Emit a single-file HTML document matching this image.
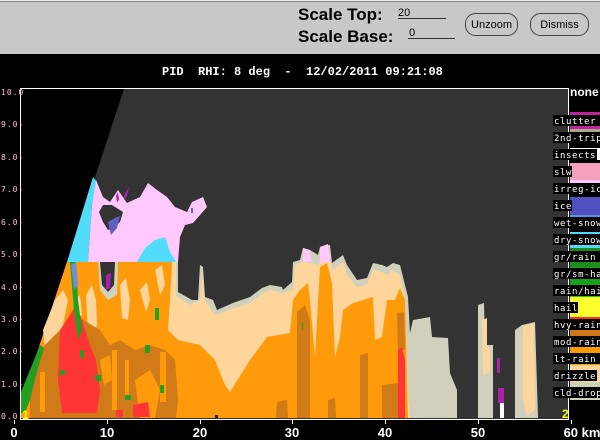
<!DOCTYPE html>
<html><head><meta charset="utf-8"><style>
html,body{margin:0;padding:0;background:#000;width:600px;height:440px;overflow:hidden}
svg{display:block}
</style></head><body>
<svg width="600" height="440" xmlns="http://www.w3.org/2000/svg">
<rect x="0" y="0" width="600" height="440" fill="#000"/>
<rect x="0" y="0" width="600" height="54" fill="#c8c8c8"/>
<rect x="0" y="0" width="600" height="1" fill="#eee"/>
<rect x="0" y="1" width="600" height="1" fill="#888"/>
<text x="298" y="20" font-family="Liberation Sans, sans-serif" font-weight="bold" font-size="17" fill="#000">Scale Top:</text>
<text x="298" y="42" font-family="Liberation Sans, sans-serif" font-weight="bold" font-size="17" fill="#000">Scale Base:</text>
<text x="398" y="16" font-family="Liberation Sans, sans-serif" font-size="11" fill="#000">20</text>
<rect x="398" y="18" width="48" height="1" fill="#333"/>
<text x="409" y="36" font-family="Liberation Sans, sans-serif" font-size="11" fill="#000">0</text>
<rect x="408" y="38" width="47" height="1" fill="#333"/>
<rect x="465.5" y="13.5" width="52" height="22" rx="10" fill="#c8c8c8" stroke="#444"/>
<text x="491.5" y="28" text-anchor="middle" font-family="Liberation Sans, sans-serif" font-size="11" fill="#000">Unzoom</text>
<rect x="530.5" y="13.5" width="58" height="22" rx="10" fill="#c8c8c8" stroke="#444"/>
<text x="559.5" y="28" text-anchor="middle" font-family="Liberation Sans, sans-serif" font-size="11" fill="#000">Dismiss</text>
<text x="162" y="75" xml:space="preserve" font-family="Liberation Mono, monospace" font-weight="bold" font-size="12" fill="#fff">PID  RHI: 8 deg  -  12/02/2011 09:21:08</text>

<rect x="21" y="89" width="547" height="330" fill="#333"/>
<polygon points="21,89 124,89 21,402" fill="#000"/>

<polygon fill="#d0d0bc" points="67,262 178,262 178,292 192,300 198,300 200,265 203,267 205,297 213,300 217,310 233,303 250,297 262,288 270,285 282,287 283,290 292,282 293,262 300,260 303,248 310,250 318,255 320,247 330,245 332,263 343,255 347,265 357,280 367,278 373,263 382,265 387,267 393,263 400,265 408,297 410,333 413,320 430,317 432,337 448,338 450,373 457,390 457,418 21,418 21,402"/>
<polygon fill="#fed69c" points="67,262 176,262 176,296 190,305 200,300 202,272 205,300 215,315 235,308 250,303 262,294 270,290 282,293 293,290 295,265 303,262 310,263 318,265 320,262 330,262 333,270 343,262 347,275 357,287 367,285 373,270 382,272 387,275 393,270 400,275 405,300 408,400 410,418 21,418 21,402"/>
<polygon fill="#d0d0bc" points="98,262 118,262 117,295 108,300 100,290"/>
<polygon fill="#333" points="100,262 115,262 114,285 108,292 102,285"/>
<polygon fill="#aa22aa" points="106,275 111,273 110,288 106,290"/>

<polygon fill="#ff9a0a" points="67,262 98,262 100,290 108,300 117,295 118,262 172,262 170,300 168,330 178,340 200,345 215,360 225,385 230,392 250,360 267,337 290,333 293,300 300,290 308,283 310,300 315,357 320,267 327,263 332,283 335,357 340,337 343,310 353,303 373,297 375,340 382,337 387,300 395,300 400,288 405,300 408,418 21,418 21,402"/>
<polygon fill="#fed69c" points="43,330 55,300 63,290 68,300 62,330 55,348 45,350"/>
<polygon fill="#fed69c" points="86,295 92,285 96,300 97,325 92,345 88,330"/>
<polygon fill="#fed69c" points="120,285 126,278 130,300 128,320 122,318"/>
<polygon fill="#fed69c" points="140,290 147,282 150,300 146,312"/>
<polygon fill="#fed69c" points="155,270 162,265 165,285 160,295"/>
<polygon fill="#fed69c" points="75,300 80,295 82,315 77,318"/>

<polygon fill="#d07a18" points="30,370 45,345 60,330 80,318 100,330 110,345 120,340 135,350 150,345 165,350 175,360 178,400 176,418 30,418"/>
<rect x="112" y="350" width="5" height="60" fill="#ff9a0a"/>
<rect x="125" y="360" width="4" height="35" fill="#ff9a0a"/>
<rect x="160" y="352" width="6" height="50" fill="#ff9a0a"/>
<rect x="40" y="372" width="5" height="40" fill="#ff9a0a"/>
<polygon fill="#d07a18" points="297,312 305,305 310,320 310,418 297,418"/>
<polygon fill="#d07a18" points="360,355 368,353 368,418 360,418"/>
<polygon fill="#d07a18" points="382,385 398,383 400,418 382,418"/>
<polygon fill="#d07a18" points="397,313 404,312 405,350 398,350"/>
<polygon fill="#d07a18" points="277,402 287,400 288,418 276,418"/>
<polygon fill="#d07a18" points="328,400 335,398 336,418 328,418"/>
<polygon fill="#ff9a0a" points="135,380 150,370 160,390 155,418 140,418"/>
<polygon fill="#ff9a0a" points="100,360 110,355 112,380 104,385"/>
<polygon fill="#ff3434" points="60,330 70,315 76,305 82,320 90,345 96,360 100,390 97,413 62,413 58,380"/>
<polygon fill="#ff3434" points="133,405 148,402 150,417 133,417"/>
<polygon fill="#ff3434" points="116,410 123,410 123,417 116,417"/>
<polygon fill="#ff3434" points="398,350 402,347 405,360 405,418 398,418"/>
<polygon fill="#22a022" points="21,392 30,370 40,345 44,348 36,375 30,400 25,413 21,413"/>
<polygon fill="#22a022" points="70,262 76,262 78,300 82,330 78,340 74,310"/>
<rect x="80" y="350" width="4" height="8" fill="#22a022"/>
<rect x="95" y="375" width="6" height="6" fill="#22a022"/>
<rect x="155" y="308" width="4" height="12" fill="#22a022"/>
<rect x="125" y="395" width="6" height="5" fill="#22a022"/>
<rect x="145" y="345" width="5" height="8" fill="#22a022"/>
<rect x="60" y="370" width="5" height="5" fill="#22a022"/>
<rect x="160" y="385" width="4" height="8" fill="#22a022"/>
<rect x="302" y="322" width="1" height="8" fill="#22a022"/>
<polygon fill="#6a8ee0" points="71,265 76,262 78,285 74,290"/>

<polygon fill="#50dcfa" points="93,177 97,182 92,205 88,262 67,262"/>
<polygon fill="#ffc8ff" points="96,180 103,197 110,202 118,190 127,203 140,197 148,183 157,190 167,197 175,207 187,212 192,202 203,197 207,207 193,223 185,225 180,237 178,262 88,262 92,205"/>
<polygon fill="#50dcfa" points="137,262 145,248 155,240 165,237 170,252 176,262"/>
<polygon fill="#333" points="103,205 112,205 123,212 120,222 113,228 108,230 103,222 99,212"/>
<polygon fill="#6060c4" points="108,222 115,218 120,216 117,228 111,235"/>
<polygon fill="#aa22aa" points="116,196 118,192 119,200 117,202"/>
<polygon fill="#aa22aa" points="124,195 129,187 127,196 124,200"/>
<rect x="191" y="208" width="2" height="5" fill="#6060c4"/>
<polygon fill="#ffc8ff" points="303,248 310,250 311,262 303,262"/>
<polygon fill="#ffc8ff" points="320,247 328,244 331,262 320,262"/>

<polygon fill="#d0d0bc" points="478,305 484,303 485,345 493,345 493,418 478,418"/>
<polygon fill="#fed69c" points="482,320 487,318 487,345 490,350 490,372 483,375"/>
<polygon fill="#d0d0bc" points="515,330 522,325 535,322 538,418 515,418"/>
<polygon fill="#fed69c" points="523,326 534,323 535,410 527,416 523,400"/>
<rect x="497" y="358" width="3" height="15" fill="#aa22aa"/>
<rect x="498" y="388" width="6" height="15" fill="#aa22aa"/>
<rect x="500" y="403" width="4" height="15" fill="#fff"/>
<rect x="222" y="410" width="5" height="5" fill="#ff9a0a"/>
<rect x="215" y="415" width="3" height="3" fill="#222"/>

<rect x="20.5" y="88.5" width="548" height="331" fill="none" stroke="#fff" stroke-width="1"/>
<text x="22" y="419" font-family="Liberation Sans, sans-serif" font-weight="bold" font-size="12" fill="#ff0">1</text>
<text x="562" y="418" font-family="Liberation Sans, sans-serif" font-weight="bold" font-size="12" fill="#ff0">2</text>

<g font-family="DejaVu Sans Mono, monospace" font-size="8" fill="#ffc0c0" letter-spacing="1">
<text x="1" y="95">10.0</text>
<text x="1" y="127">9.0-</text>
<text x="1" y="160">8.0-</text>
<text x="1" y="192">7.0-</text>
<text x="1" y="225">6.0-</text>
<text x="1" y="257">5.0-</text>
<text x="1" y="290">4.0-</text>
<text x="1" y="322">3.0-</text>
<text x="1" y="354">2.0-</text>
<text x="1" y="387">1.0-</text>
<text x="1" y="419">0.0-</text>
</g>
<g fill="#fff">
<rect x="14" y="420" width="1" height="4"/><rect x="107" y="420" width="1" height="4"/><rect x="200" y="420" width="1" height="4"/><rect x="292" y="420" width="1" height="4"/><rect x="385" y="420" width="1" height="4"/><rect x="478" y="420" width="1" height="4"/><rect x="571" y="420" width="1" height="4"/>
</g>
<g font-family="Liberation Sans, sans-serif" font-weight="bold" font-size="13" fill="#fff" text-anchor="middle">
<text x="14" y="437">0</text><text x="107" y="437">10</text><text x="200" y="437">20</text><text x="292" y="437">30</text><text x="385" y="437">40</text><text x="478" y="437">50</text><text x="582" y="437">60 km</text>
</g>

<rect x="570" y="112" width="30" height="17" fill="#c0229c"/>
<rect x="570" y="129" width="30" height="6" fill="#a8a888"/>
<rect x="570" y="148" width="30" height="12" fill="#fff"/>
<rect x="570" y="163" width="30" height="17" fill="#f4a0bc"/>
<rect x="570" y="180" width="30" height="6" fill="#ffc8ff"/>
<rect x="570" y="197" width="30" height="18" fill="#5050c0"/>
<rect x="570" y="215" width="30" height="5" fill="#6090e0"/>
<rect x="570" y="232" width="30" height="16" fill="#50d8f8"/>
<rect x="570" y="248" width="30" height="19" fill="#208a20"/>
<rect x="570" y="267" width="30" height="18" fill="#18a018"/>
<rect x="570" y="285" width="30" height="12" fill="#20c820"/>
<rect x="570" y="297" width="30" height="20" fill="#ffff30"/>
<rect x="570" y="317" width="30" height="13" fill="#ff3030"/>
<rect x="570" y="330" width="30" height="17" fill="#d07818"/>
<rect x="570" y="347" width="30" height="18" fill="#ff9900"/>
<rect x="570" y="365" width="30" height="17" fill="#fed69c"/>
<rect x="570" y="382" width="30" height="18" fill="#d0d0b8"/>
<text x="570" y="96" font-family="Liberation Sans, sans-serif" font-weight="bold" font-size="12" fill="#fff">none</text>
<g font-family="DejaVu Sans Mono, monospace" font-size="9" fill="#fff" letter-spacing="0.6">
<rect x="553" y="115" width="47" height="11" fill="#000"/><text x="554" y="124">clutter</text>
<rect x="553" y="132" width="47" height="11" fill="#000"/><text x="554" y="141">2nd-trip</text>
<rect x="553" y="149" width="44" height="11" fill="#000"/><text x="554" y="158">insects</text>
<rect x="553" y="166" width="19" height="11" fill="#000"/><text x="554" y="175">slw</text>
<rect x="553" y="183" width="47" height="11" fill="#000"/><text x="554" y="192">irreg-ice</text>
<rect x="553" y="200" width="19" height="11" fill="#000"/><text x="554" y="209">ice</text>
<rect x="553" y="217" width="47" height="11" fill="#000"/><text x="554" y="226">wet-snow</text>
<rect x="553" y="234" width="47" height="11" fill="#000"/><text x="554" y="243">dry-snow</text>
<rect x="553" y="251" width="47" height="11" fill="#000"/><text x="554" y="260">gr/rain</text>
<rect x="553" y="268" width="47" height="11" fill="#000"/><text x="554" y="277">gr/sm-hail</text>
<rect x="553" y="285" width="47" height="11" fill="#000"/><text x="554" y="294">rain/hail</text>
<rect x="553" y="302" width="25" height="11" fill="#000"/><text x="554" y="311">hail</text>
<rect x="553" y="319" width="47" height="11" fill="#000"/><text x="554" y="328">hvy-rain</text>
<rect x="553" y="336" width="47" height="11" fill="#000"/><text x="554" y="345">mod-rain</text>
<rect x="553" y="353" width="47" height="11" fill="#000"/><text x="554" y="362">lt-rain</text>
<rect x="553" y="370" width="44" height="11" fill="#000"/><text x="554" y="379">drizzle</text>
<rect x="553" y="387" width="47" height="11" fill="#000"/><text x="554" y="396">cld-drop</text>
</g>
</svg>
</body></html>
